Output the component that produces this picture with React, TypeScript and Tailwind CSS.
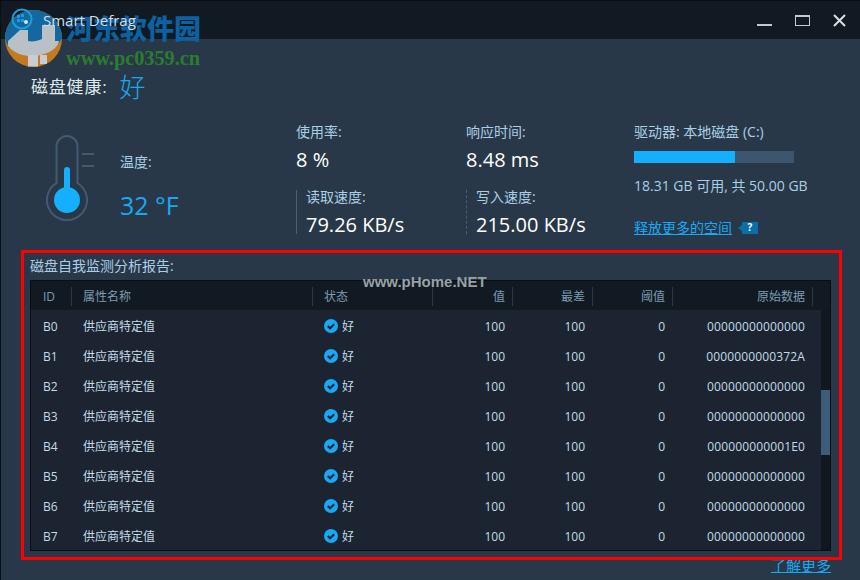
const rows = [
  ["B0", "00000000000000"],
  ["B1", "0000000000372A"],
  ["B2", "00000000000000"],
  ["B3", "00000000000000"],
  ["B4", "000000000001E0"],
  ["B5", "00000000000000"],
  ["B6", "00000000000000"],
  ["B7", "00000000000000"],
];

const columns = "grid grid-cols-[41px_241px_120px_80px_80px_80px_140px]";

const HeadCell = ({ label, pad }: { label: string; pad: string }) => (
  <div className={`h-[19px] flex items-center border-r border-[#2a3845] pr-[7px] ${pad}`}>
    {label}
  </div>
);

const CheckIcon = () => (
  <svg width="14" height="14" viewBox="0 0 14 14" className="-translate-y-px">
    <circle cx="7" cy="7" r="7" fill="#18a9f5" />
    <path d="M3.8 7 L6.1 9.3 L10.2 5.2" fill="none" stroke="#17222e" strokeWidth="2" />
  </svg>
);

const Thermometer = () => (
  <svg width="50" height="88" viewBox="0 0 50 88" className="shrink-0">
    <path
      d="M11.5 48 V11.5 a10.5 10.5 0 0 1 21 0 V48 A20 20 0 1 1 11.5 48 Z"
      fill="none"
      stroke="#435a72"
      strokeWidth="2"
    />
    <rect x="19" y="32" width="6" height="30" rx="3" fill="#14b0ff" />
    <circle cx="22" cy="65" r="13" fill="#14b0ff" />
    <path d="M37 19 H49 M37 31 H49" stroke="#435a72" strokeWidth="2" />
  </svg>
);

const WatermarkLogo = () => (
  <svg width="57" height="57" viewBox="0 0 57 57" className="absolute left-[4px] top-[9px]">
    <circle cx="28.5" cy="28.5" r="28.5" fill="#c47a20" />
    <path d="M0 28.5 A28.5 28.5 0 0 1 57 28.5 L54 33 L4 38 A28.5 28.5 0 0 1 0 28.5 Z" fill="#14689f" />
    <path
      d="M3 31 L15 20 H23 V31 C28 32 32 31 37 29 V15 H50 V31 L54 31 C52 40 40 46 26 46 C16 46 8 42 3 36 Z"
      fill="#b9c0c6"
    />
    <path d="M23 45 H33 V56.5 H23 Z M35 45 H42 V54 H35 Z" fill="#c9ccd0" />
  </svg>
);

export default function App() {
  return (
    <div
      className="relative w-[860px] h-[580px] overflow-hidden bg-[#293848] border-l border-t border-[#0a0e12] text-[#a9cfe4] text-[14px]"
      style={{ fontFamily: '"Open Sans", "Noto Sans CJK SC", sans-serif' }}
    >
      {/* title bar */}
      <div className="h-[38px] bg-[#111a22] flex items-center pl-[10px]">
        <svg width="22" height="22" viewBox="0 0 22 22" className="relative z-10 mb-[3px]">
          <circle cx="11" cy="11" r="9.5" fill="none" stroke="#1a9ede" strokeWidth="2" />
          <path d="M6 7h3v3H6zM10 6h3v3h-3zM6 11h3v3H6zM10 11h3v3h-3z" fill="#1a9ede" />
          <circle cx="15" cy="14" r="2" fill="#cfe6f2" />
        </svg>
        <span className="relative z-10 ml-[10px] text-[15px] text-[#d5dde3]">Smart Defrag</span>
        <div className="ml-auto flex items-center mr-[14px] gap-[23px]">
          <div className="w-[15px] h-[2px] bg-[#bfcbd2] mt-[10px]" />
          <div className="w-[15px] h-[11px] border border-[#bfcbd2] border-t-[2px]" />
          <svg width="13" height="13" viewBox="0 0 13 13">
            <path d="M1 1 L12 12 M12 1 L1 12" stroke="#d9e0e4" strokeWidth="2" />
          </svg>
        </div>
      </div>

      {/* health */}
      <div className="h-[65px] pl-[30px] pt-[31px] flex items-center text-[17px]">
        <span className="text-[#dfeaf0] tracking-[0.8px]">磁盘健康:</span>
        <span className="ml-[12px] text-[26px] text-[#18a9f5] font-light">好</span>
      </div>

      {/* stats */}
      <div className="h-[146px] flex">
        <div className="w-[295px] flex items-start pl-[44px] pt-[31px]">
          <Thermometer />
          <div className="ml-[25px] pt-[16px]">
            <div>温度:</div>
            <div className="mt-[15px] text-[25px] leading-[36px] text-[#18a9f5]">32 °F</div>
          </div>
        </div>

        <div className="w-[170px] pt-[17px]">
          <div>使用率:</div>
          <div className="mt-[4px] text-[20px] leading-[28px] text-white">8 %</div>
          <div className="mt-[16px] border-l border-[#4a5f73] pl-[9px] h-[44px]">
            <div className="leading-[14px]">读取速度:</div>
            <div className="mt-[7px] text-[20px] leading-[28px] text-white whitespace-nowrap">79.26 KB/s</div>
          </div>
        </div>

        <div className="w-[168px] pt-[17px]">
          <div>响应时间:</div>
          <div className="mt-[4px] text-[20px] leading-[28px] text-white">8.48 ms</div>
          <div className="mt-[16px] border-l border-dashed border-[#4a5f73] pl-[9px] h-[44px]">
            <div className="leading-[14px]">写入速度:</div>
            <div className="mt-[7px] text-[20px] leading-[28px] text-white whitespace-nowrap">215.00 KB/s</div>
          </div>
        </div>

        <div className="pt-[17px]">
          <div>驱动器: 本地磁盘 (C:)</div>
          <div className="mt-[9px] w-[160px] h-[12px] bg-[#3c566f]">
            <div className="w-[101px] h-full bg-[#14b0ff]" />
          </div>
          <div className="mt-[12px] text-[14px]">18.31 GB 可用, 共 50.00 GB</div>
          <div className="mt-[21px] flex items-center">
            <span className="text-[#18a9f5] underline">释放更多的空间</span>
            <span className="ml-[6px] border-y-[3px] border-r-[4px] border-y-transparent border-r-[#0c6ea6]" />
            <span className="w-[16px] h-[12px] bg-[#0c6ea6] text-white text-[10px] font-bold flex items-center justify-center">?</span>
          </div>
        </div>
      </div>

      {/* smart report, red box is an annotation on the screenshot */}
      <div className="relative z-10 ml-[20px] w-[821px] h-[310px] border-[3px] border-[#ff0000] px-[6px]">
        <div className="h-[27px] pt-[2px] text-[14px] leading-[22px]">磁盘自我监测分析报告:</div>
        <div className="w-[801px] h-[271px] border border-[#0a0e12] bg-[#1b2430] flex flex-col text-[12px]">
          <div className={`${columns} h-[29px] pt-[2px] bg-[#111a22] items-center text-[#7d9cb3] text-[12px]`}>
            <HeadCell label="ID" pad="pl-[12px]" />
            <HeadCell label="属性名称" pad="pl-[11px]" />
            <HeadCell label="状态" pad="pl-[11px]" />
            <HeadCell label="值" pad="justify-end" />
            <HeadCell label="最差" pad="justify-end" />
            <HeadCell label="阈值" pad="justify-end" />
            <HeadCell label="原始数据" pad="justify-end" />
          </div>
          <div className="relative flex-1 overflow-hidden pt-px">
            {rows.map(([id, raw]) => (
              <div key={id} className={`${columns} h-[30px] pt-[2px] items-center text-[#c3dbe8]`}>
                <div className="pl-[12px]">{id}</div>
                <div className="pl-[11px]">供应商特定值</div>
                <div className="pl-[11px] flex items-center gap-[4px]">
                  <CheckIcon />
                  <span>好</span>
                </div>
                <div className="text-right pr-[8px]">100</div>
                <div className="text-right pr-[8px]">100</div>
                <div className="text-right pr-[8px]">0</div>
                <div className="text-right pr-[8px] tracking-[0.14px]">{raw}</div>
              </div>
            ))}
            <div className="absolute right-0 top-0 bottom-0 w-[9px] bg-[#10171e]">
              <div className="mt-[80px] h-[65px] bg-[#3d5c78]" />
            </div>
          </div>
        </div>
      </div>

      <div className="mt-[-5px] flex justify-end pr-[29px] text-[#18a9f5] text-[15px] leading-[20px]">
        <span className="underline">了解更多</span>
      </div>

      {/* pasted-on watermarks */}
      <WatermarkLogo />
      <div
        className="absolute left-[65px] top-[10px] text-[27px] leading-[34px] font-black text-[#0c62a0] whitespace-nowrap"
        style={{ fontFamily: '"Noto Sans CJK SC", sans-serif' }}
      >
        河东软件园
      </div>
      <div
        className="absolute left-[65px] top-[46px] text-[20.3px] leading-[22px] font-bold text-[#2a7d2e] whitespace-nowrap"
        style={{ fontFamily: '"Liberation Serif", serif' }}
      >
        www.pc0359.cn
      </div>
      <div
        className="absolute left-[362px] top-[271px] z-20 text-[15px] leading-[20px] font-bold text-[#98a1a6] whitespace-nowrap"
        style={{ fontFamily: '"Liberation Sans", sans-serif' }}
      >
        www.pHome.NET
      </div>
    </div>
  );
}
